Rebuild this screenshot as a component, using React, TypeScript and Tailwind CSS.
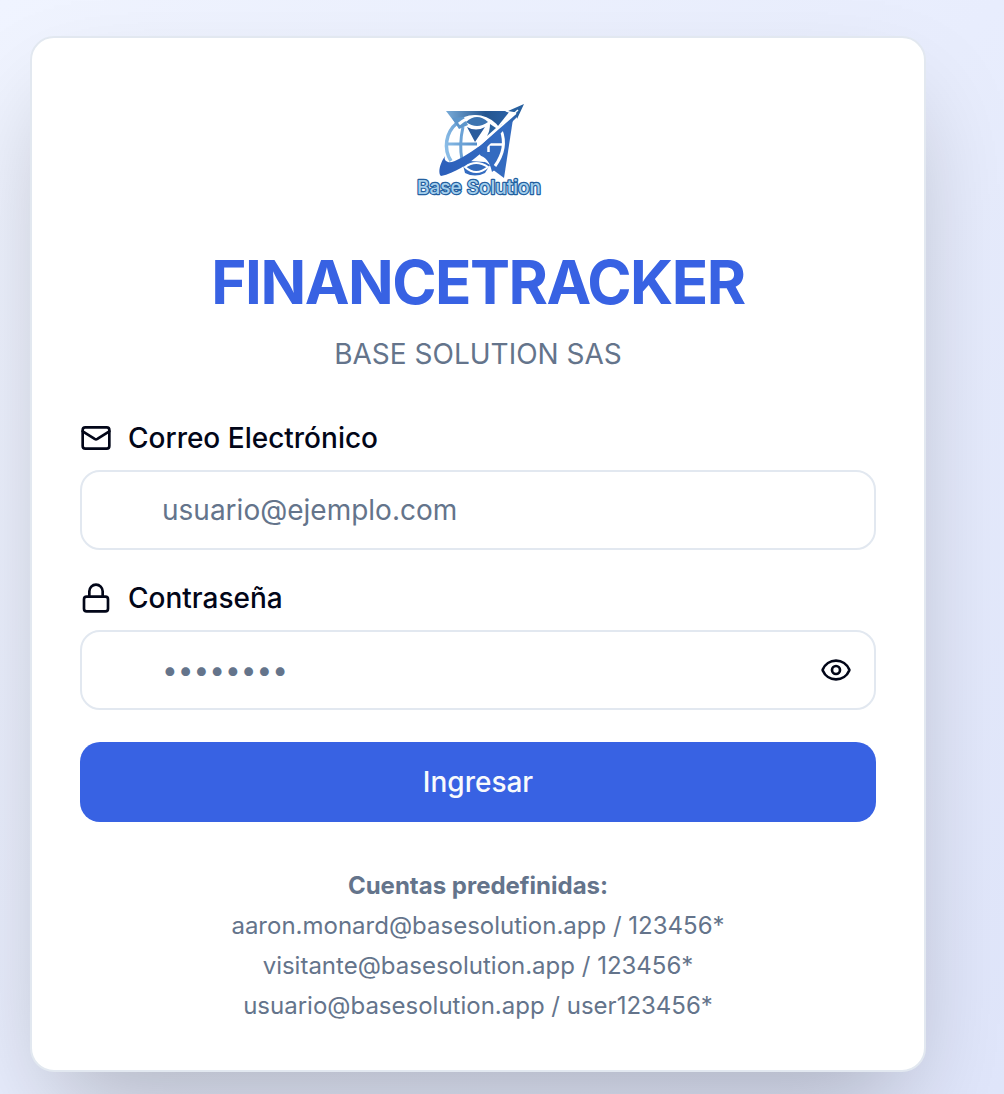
import { useState } from "react";
import { Eye, EyeOff, Lock, Mail } from "lucide-react";

const accounts = [
  "aaron.monard@basesolution.app / 123456*",
  "visitante@basesolution.app / 123456*",
  "usuario@basesolution.app / user123456*",
];

function Logo() {
  return (
    <svg viewBox="0 0 128 128" className="h-32 w-32" role="img" aria-label="Base Solution">
      <defs>
        <linearGradient id="sail" gradientUnits="userSpaceOnUse" x1="32" y1="30" x2="98" y2="30">
          <stop offset="0" stopColor="#78abd8" />
          <stop offset="0.6" stopColor="#25568f" />
          <stop offset="1" stopColor="#2b62a8" />
        </linearGradient>
        <linearGradient id="lines" gradientUnits="userSpaceOnUse" x1="32" y1="60" x2="66" y2="50">
          <stop offset="0" stopColor="#8abce6" />
          <stop offset="1" stopColor="#4a86c4" />
        </linearGradient>
        <linearGradient id="swoosh" gradientUnits="userSpaceOnUse" x1="27" y1="88" x2="109" y2="19">
          <stop offset="0" stopColor="#2c5fbb" />
          <stop offset="0.75" stopColor="#346dc2" />
          <stop offset="1" stopColor="#24578f" />
        </linearGradient>
      </defs>
      <path d="M32 25H96L84 40L42 38Z" fill="url(#sail)" />
      <path d="M99 33L90 92L74 80L66 62Z" fill="#336bc0" />
      <circle cx="61" cy="59" r="30" fill="#fff" />
      <path d="M43 37A29 29 0 0 0 37 75" fill="none" stroke="url(#lines)" strokeWidth="3.500" />
      <path d="M34 56.500H63V59.500H34Z" fill="url(#lines)" />
      <path d="M49 41Q45 58 48 74" fill="none" stroke="#6ba2d6" strokeWidth="3" />
      <path d="M38 32L50 31L54 39L45 43L41 37Z" fill="#5d96cb" />
      <path d="M45 38Q61 24 79 38" fill="none" stroke="#fff" strokeWidth="3" />
      <path d="M53 41Q62 46 71 41L61 56Z" fill="#2a5c9c" />
      <path d="M52 36Q63 26 74 36Q63 44 52 36Z" fill="#3c74b0" />
      <path d="M76 38L82 42L73 50Q76 45 76 38Z" fill="#2b629f" />
      <path d="M88 38A34 34 0 0 1 78 86Q75 71 64 69L72 56Z" fill="#336bc0" />
      <path d="M87 44Q94 62 81 80" fill="none" stroke="#fff" strokeWidth="3" />
      <path d="M74 58.500H89M74.500 54V66" stroke="#fff" strokeWidth="2.500" />
      <path d="M49 79Q62 69 76 79L71 87Q61 92 51 87Z" fill="#336bc0" />
      <path d="M51 81Q62 73 74 81Q62 91 51 81Z" fill="#3269bb" stroke="#fff" strokeWidth="2" />
      <path d="M64 66L71 76L56 75Z" fill="#fff" />
      <path d="M31 70C25 79 24 88 27 90C41 87 53 79 66 68L104 30L103 26L68 58C52 70 38 78 34 76C31 75 30 73 31 70Z" fill="url(#swoosh)" />
      <path d="M64 60L102 27" fill="none" stroke="#fff" strokeWidth="1.800" />
      <path d="M92 24L99 26.500L110 18L103 36" fill="none" stroke="#fff" strokeWidth="3" />
      <path d="M94 25L110 18L103 33L102.500 26.500Z" fill="#28609f" />
      <path d="M96 31L104 24" stroke="#fff" strokeWidth="1.500" />
      <text
        x="65"
        y="108"
        textAnchor="middle"
        className="font-['Inter',sans-serif] text-[19px] font-medium"
        fill="#a5cfec"
        stroke="#24609f"
        strokeWidth="2.400"
        strokeLinejoin="round"
        paintOrder="stroke"
      >
        Base Solution
      </text>
    </svg>
  );
}

const inputClass =
  "h-20 w-full rounded-[20px] border-2 border-slate-200 bg-white pl-20 text-[28px] text-slate-950 outline-none placeholder:text-[#64748b] focus:border-[#3862e3]";

export default function App() {
  const [visible, setVisible] = useState(false);

  return (
    <main className="min-h-screen overflow-hidden bg-linear-to-br from-[#f0f4ff] to-[#e0e6fb] pt-9 pr-[78px] pb-[22px] pl-[30px] font-['Inter',sans-serif] text-slate-950">
      <div className="w-full max-w-4xl rounded-3xl border-2 border-slate-200 bg-white p-12 shadow-[0_50px_100px_-24px_rgba(0,0,0,0.25)]">
        <header className="flex flex-col items-center text-center">
          <Logo />
          <h1 className="mt-8 text-[60px] leading-[72px] font-bold tracking-tight text-[#3862e3]">
            FINANCETRACKER
          </h1>
          <p className="mt-4 text-[28px] leading-10 text-[#64748b]">BASE SOLUTION SAS</p>
        </header>

        <form className="mt-12 flex flex-col gap-8" onSubmit={(e) => e.preventDefault()}>
          <div className="flex flex-col gap-4">
            <label htmlFor="email" className="flex items-center gap-4 text-[28px] leading-8 font-medium">
              <Mail size={32} />
              Correo Electrónico
            </label>
            <input id="email" type="email" placeholder="usuario@ejemplo.com" className={`${inputClass} pr-6`} />
          </div>
          <div className="flex flex-col gap-4">
            <label htmlFor="password" className="flex items-center gap-4 text-[28px] leading-8 font-medium">
              <Lock size={32} />
              Contraseña
            </label>
            <div className="relative">
              <input
                id="password"
                type={visible ? "text" : "password"}
                placeholder="••••••••"
                className={`${inputClass} pr-20`}
              />
              <button
                type="button"
                aria-label={visible ? "Ocultar contraseña" : "Mostrar contraseña"}
                onClick={() => setVisible(!visible)}
                className="absolute inset-y-0 right-0 flex w-20 items-center justify-center"
              >
                {visible ? <EyeOff size={32} /> : <Eye size={32} />}
              </button>
            </div>
          </div>
          <button type="submit" className="h-20 rounded-[20px] bg-[#3862e3] text-[28px] font-medium text-slate-50">
            Ingresar
          </button>
        </form>

        <div className="mt-12 flex flex-col gap-2 text-center text-2xl leading-8 text-[#64748b]">
          <p className="font-bold">Cuentas predefinidas:</p>
          {accounts.map((account) => (
            <p key={account}>{account}</p>
          ))}
        </div>
      </div>
    </main>
  );
}
